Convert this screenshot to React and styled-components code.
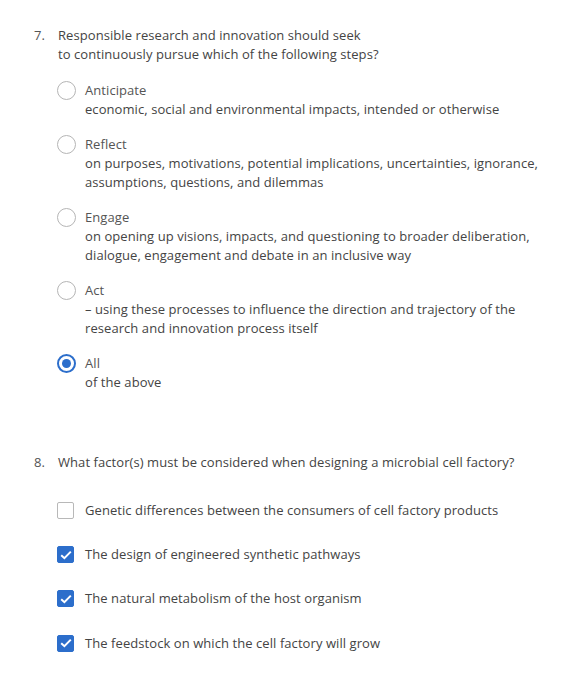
import { createGlobalStyle, styled } from 'styled-components';

const GlobalStyle = createGlobalStyle`
    body {
        margin: 0;
        background: #fff;
        font-family: "Open Sans", "Liberation Sans", sans-serif;
        font-size: 13px;
        letter-spacing: 0.07px;
        color: #444;
    }
`;

const Page = styled.div`
    padding: 26px 20px 0 34px;
`;

const Question = styled.div`
    display: flex;
    margin-bottom: ${(p) => p.$gap || 0}px;
`;

const Number = styled.div`
    width: 24px;
    flex-shrink: 0;
    line-height: 19px;
    color: #555;
`;

const Body = styled.div`
    flex: 1;
`;

const Prompt = styled.div`
    line-height: 19px;
    color: #444;
`;

const Options = styled.div`
    display: flex;
    flex-direction: column;
    gap: ${(p) => p.$gap}px;
    margin: ${(p) => p.$top}px 0 0 -1px;
`;

const Option = styled.div`
    display: flex;
    align-items: ${(p) => (p.$center ? 'center' : 'flex-start')};
    gap: ${(p) => (p.$center ? 11 : 9)}px;
    line-height: 19px;
`;

const Radio = styled.span`
    box-sizing: border-box;
    width: 19px;
    height: 19px;
    flex-shrink: 0;
    border-radius: 50%;
    border: ${(p) => (p.$checked ? '2px solid #2c6ecb' : '1.5px solid #b5b5b5')};
    display: flex;
    align-items: center;
    justify-content: center;

    &::after {
        content: '';
        display: ${(p) => (p.$checked ? 'block' : 'none')};
        width: 9px;
        height: 9px;
        border-radius: 50%;
        background: #2c6ecb;
    }
`;

const Box = styled.span`
    box-sizing: border-box;
    width: 17px;
    height: 17px;
    flex-shrink: 0;
    border-radius: 2px;
    border: 1.5px solid ${(p) => (p.$checked ? '#2c6ecb' : '#b8b8b8')};
    background: ${(p) => (p.$checked ? '#2c6ecb' : '#fff')};
    display: flex;
    align-items: center;
    justify-content: center;
`;

const Label = styled.div`
    color: #444;
`;

const Title = styled.div`
    color: #555;
`;

const radioOptions = [
    ['Anticipate', 'economic, social and environmental impacts, intended or otherwise'],
    ['Reflect', 'on purposes, motivations, potential implications, uncertainties, ignorance, assumptions, questions, and dilemmas'],
    ['Engage', 'on opening up visions, impacts, and questioning to broader deliberation, dialogue, engagement and debate in an inclusive way'],
    ['Act', '– using these processes to influence the direction and trajectory of the research and innovation process itself'],
    ['All', 'of the above'],
];

const checkOptions = [
    ['Genetic differences between the consumers of cell factory products', false],
    ['The design of engineered synthetic pathways', true],
    ['The natural metabolism of the host organism', true],
    ['The feedstock on which the cell factory will grow', true],
];

function Check() {
    return (
        <svg width="12" height="10" viewBox="0 0 12 10" fill="none">
            <path d="M1.2 5.2 4.4 8.2 10.8 1.6" stroke="#fff" strokeWidth="2" />
        </svg>
    );
}

export default function App() {
    return (
        <>
            <GlobalStyle />
            <Page>
                <Question $gap={61}>
                    <Number>7.</Number>
                    <Body>
                        <Prompt>
                            Responsible research and innovation should seek
                            <br />
                            to continuously pursue which of the following steps?
                        </Prompt>
                        <Options $gap={16} $top={17}>
                            {radioOptions.map(([title, text], i) => (
                                <Option key={title}>
                                    <Radio $checked={i === radioOptions.length - 1} />
                                    <Label>
                                        <Title>{title}</Title>
                                        {text}
                                    </Label>
                                </Option>
                            ))}
                        </Options>
                    </Body>
                </Question>
                <Question>
                    <Number>8.</Number>
                    <Body>
                        <Prompt>What factor(s) must be considered when designing a microbial cell factory?</Prompt>
                        <Options $gap={25.2} $top={29}>
                            {checkOptions.map(([text, checked]) => (
                                <Option key={text} $center>
                                    <Box $checked={checked}>{checked && <Check />}</Box>
                                    <Label>{text}</Label>
                                </Option>
                            ))}
                        </Options>
                    </Body>
                </Question>
            </Page>
        </>
    );
}
